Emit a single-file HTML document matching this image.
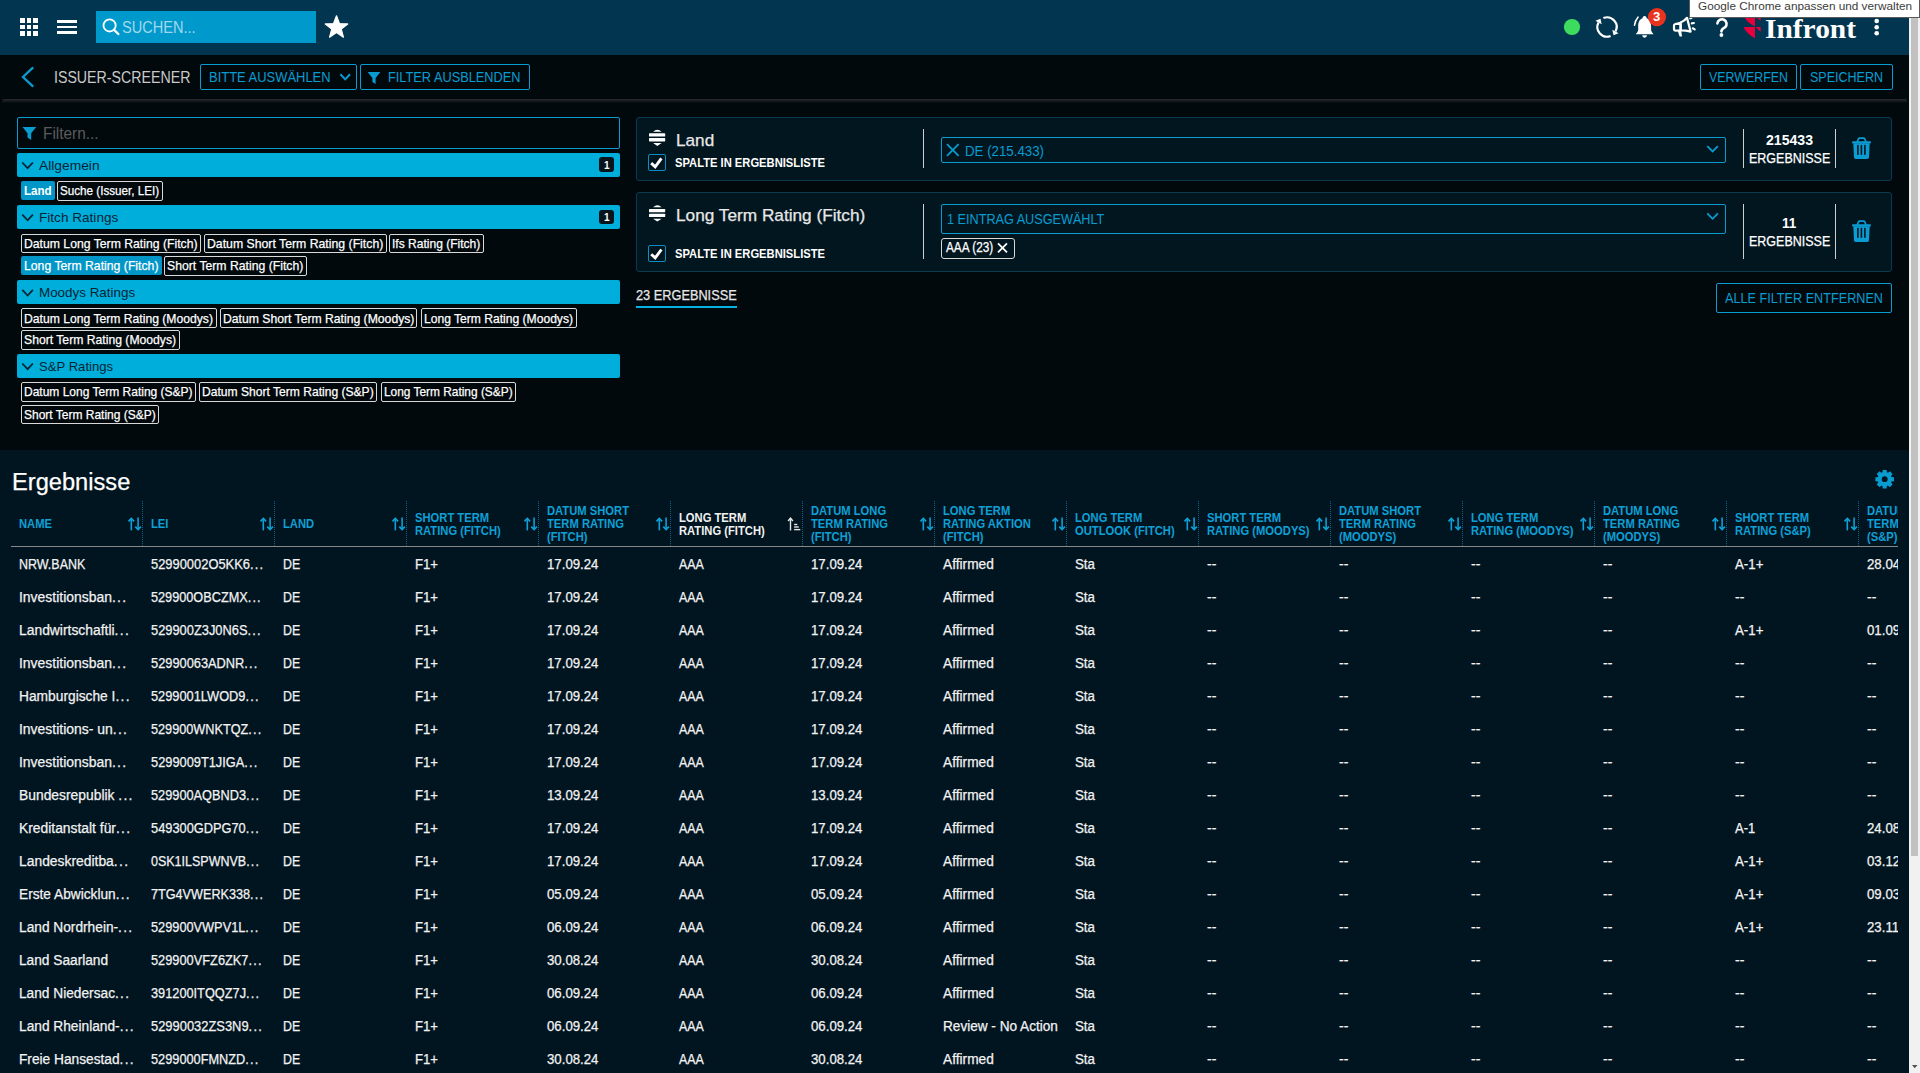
<!DOCTYPE html>
<html><head><meta charset="utf-8"><title>Issuer-Screener</title>
<style>
html,body{margin:0;padding:0}
body{width:1920px;height:1073px;overflow:hidden;position:relative;background:#02090d;font-family:"Liberation Sans",sans-serif}
.t{position:absolute;white-space:pre;transform-origin:0 0}
.s{-webkit-text-stroke:0.25px currentColor}
svg{position:absolute;overflow:visible}

</style></head><body>
<div style="position:absolute;left:0px;top:0px;width:1909px;height:55px;background:#023550"></div>
<div style="position:absolute;left:20px;top:18px;width:4.7px;height:4.7px;background:#fff"></div>
<div style="position:absolute;left:20px;top:24.6px;width:4.7px;height:4.7px;background:#fff"></div>
<div style="position:absolute;left:20px;top:31.2px;width:4.7px;height:4.7px;background:#fff"></div>
<div style="position:absolute;left:26.55px;top:18px;width:4.7px;height:4.7px;background:#fff"></div>
<div style="position:absolute;left:26.55px;top:24.6px;width:4.7px;height:4.7px;background:#fff"></div>
<div style="position:absolute;left:26.55px;top:31.2px;width:4.7px;height:4.7px;background:#fff"></div>
<div style="position:absolute;left:33.1px;top:18px;width:4.7px;height:4.7px;background:#fff"></div>
<div style="position:absolute;left:33.1px;top:24.6px;width:4.7px;height:4.7px;background:#fff"></div>
<div style="position:absolute;left:33.1px;top:31.2px;width:4.7px;height:4.7px;background:#fff"></div>
<div style="position:absolute;left:57px;top:20px;width:20px;height:2.5px;background:#fff"></div>
<div style="position:absolute;left:57px;top:25.6px;width:20px;height:2.5px;background:#fff"></div>
<div style="position:absolute;left:57px;top:31px;width:20px;height:2.5px;background:#fff"></div>
<div style="position:absolute;left:96px;top:11px;width:220px;height:32px;background:#0099cc"></div>
<svg style="left:0;top:0" width="1" height="1"><circle cx="109.6" cy="25.4" r="6.1" fill="none" stroke="#fff" stroke-width="1.8"/><line x1="114" y1="29.8" x2="118.4" y2="34" stroke="#fff" stroke-width="2.3" stroke-linecap="round"/></svg>
<div class="t" style="left:122.40px;top:19.00px;font-size:17.4px;line-height:17.4px;color:#a3d8ec;font-weight:normal;transform:scaleX(0.8370);">SUCHEN...</div>
<svg style="left:0;top:0" width="1" height="1"><polygon points="336.50,15.80 339.44,23.55 347.72,23.95 341.26,29.15 343.44,37.15 336.50,32.60 329.56,37.15 331.74,29.15 325.28,23.95 333.56,23.55" fill="#fff" stroke="#fff" stroke-width="1.2" stroke-linejoin="round"/></svg>
<svg style="left:0;top:0" width="1" height="1"><circle cx="1572" cy="27" r="8.1" fill="#3ddc5f"/></svg>
<svg style="left:0;top:0" width="1" height="1"><path d="M1603.40,18.10 A9.6,9.6 0 0 1 1615.48,31.51" fill="none" stroke="#fff" stroke-width="2.2"/><path d="M1610.60,35.90 A9.6,9.6 0 0 1 1598.52,22.49" fill="none" stroke="#fff" stroke-width="2.2"/><polygon points="1613.50,35.22 1618.63,33.18 1612.32,29.83" fill="#fff"/><polygon points="1600.50,18.78 1595.37,20.82 1601.68,24.17" fill="#fff"/></svg>
<svg style="left:0;top:0" width="1" height="1"><path d="M1644.6,16 C1643.2,16 1642.6,17 1642.6,18.2 C1639.3,19.2 1638.2,22.5 1638.2,26 L1638.2,29.8 C1638.2,31.6 1636.6,33 1635.8,34.2 L1653.6,34.2 C1652.7,33 1651.1,31.6 1651.1,29.8 L1651.1,26 C1651.1,22.5 1650,19.2 1646.6,18.2 C1646.6,17 1646,16 1644.6,16 Z M1642.2,35.3 A2.4,2.4 0 0 0 1647,35.3 Z" fill="#fff"/><path d="M1634.5,25.3 C1634.8,22 1636,19.6 1638,17.2" fill="none" stroke="#fff" stroke-width="1.6" stroke-linecap="round"/></svg>
<svg style="left:0;top:0" width="1" height="1"><circle cx="1657" cy="17.1" r="9.1" fill="#e8341f"/></svg>
<div class="t" style="left:1653.30px;top:11.40px;font-size:12px;line-height:12px;color:#fff;font-weight:bold;transform:scaleX(1.0916);">3</div>
<svg style="left:0;top:0" width="1" height="1"><g fill="none" stroke="#fff" stroke-width="2.2" stroke-linejoin="round" stroke-linecap="round"><path d="M1680.6,22.6 Q1684.4,21 1687,17.8 L1690.6,31.6 Q1685.6,30.2 1680.6,30.3 Z"/><path d="M1674,25.6 Q1674,24.3 1675.3,24 L1680.6,22.8 L1680.6,30.3 L1675.3,30.6 Q1674,30.6 1674,29.3 Z"/><path d="M1690.3,18.3 L1691.5,17.9"/><path d="M1691.8,23.3 L1693.9,23"/><path d="M1692.8,28.3 L1694.7,29.4"/></g><path d="M1677.6,30.6 L1681.2,30.4 L1682,36.4 L1679.6,36.6 Z" fill="#fff"/></svg>
<svg style="left:0;top:0" width="1" height="1"><path d="M1717.4,23.4 A4.6,4.6 0 1 1 1725.2,27.2 Q1721.5,29.2 1721.4,31.4" fill="none" stroke="#fff" stroke-width="2.6" stroke-linecap="round"/><circle cx="1721.4" cy="35" r="1.9" fill="#fff"/></svg>
<svg style="left:0;top:0" width="1" height="1"><g fill="#e8003d"><path d="M1744.9,17.9 L1755,17.9 L1755,26.3 Q1748.5,23.5 1744.9,17.9 Z"/><path d="M1757,17.9 L1760.7,17.9 L1760.7,20.8 Z"/><path d="M1743.5,27 L1755,27 L1755,38.3 Q1746.5,34 1743.5,27 Z"/><path d="M1755.5,27 L1760.7,27 L1760.7,32 Z"/></g></svg>
<div class="t" style="left:1764.60px;top:15.20px;font-size:27.8px;line-height:27.8px;color:#fff;font-weight:bold;font-family:'Liberation Serif', serif;transform:scaleX(1.0583);">Infront</div>
<svg style="left:0;top:0" width="1" height="1"><circle cx="1876.7" cy="21" r="2.3" fill="#fff"/></svg>
<svg style="left:0;top:0" width="1" height="1"><circle cx="1876.7" cy="27.2" r="2.3" fill="#fff"/></svg>
<svg style="left:0;top:0" width="1" height="1"><circle cx="1876.7" cy="33.3" r="2.3" fill="#fff"/></svg>
<svg style="left:0;top:0" width="1" height="1"><polyline points="33.2,67.4 23,77 33.2,86.6" fill="none" stroke="#089cd1" stroke-width="2.3"/></svg>
<div class="t" style="left:53.60px;top:69.00px;font-size:17.4px;line-height:17.4px;color:#c9c9c9;font-weight:normal;transform:scaleX(0.8159);">ISSUER-SCREENER</div>
<div style="position:absolute;left:200px;top:64px;width:157px;height:26px;box-sizing:border-box;border:1.5px solid #089cd1;border-radius:2px"></div>
<div class="t" style="left:209.00px;top:69.20px;font-size:15px;line-height:15px;color:#089cd1;font-weight:normal;transform:scaleX(0.8633);">BITTE AUSWÄHLEN</div>
<svg style="left:0;top:0" width="1" height="1"><polyline points="340.4,74.2 345.2,79.4 350,74.2" fill="none" stroke="#089cd1" stroke-width="2"/></svg>
<div style="position:absolute;left:360px;top:64px;width:170px;height:26px;box-sizing:border-box;border:1.5px solid #089cd1;border-radius:2px"></div>
<svg style="left:0;top:0" width="1" height="1"><path d="M367.6,72 L380.4,72 L375.6,78 L375.6,84 L372.4,82 L372.4,78 Z" fill="#089cd1"/></svg>
<div class="t" style="left:388.00px;top:69.20px;font-size:15px;line-height:15px;color:#089cd1;font-weight:normal;transform:scaleX(0.8515);">FILTER AUSBLENDEN</div>
<div style="position:absolute;left:1700px;top:64px;width:97px;height:26px;box-sizing:border-box;border:1.5px solid #089cd1;border-radius:2px"></div>
<div class="t" style="left:1708.60px;top:69.10px;font-size:15px;line-height:15px;color:#089cd1;font-weight:normal;transform:scaleX(0.8265);">VERWERFEN</div>
<div style="position:absolute;left:1800px;top:64px;width:93px;height:26px;box-sizing:border-box;border:1.5px solid #089cd1;border-radius:2px"></div>
<div class="t" style="left:1809.80px;top:69.10px;font-size:15px;line-height:15px;color:#089cd1;font-weight:normal;transform:scaleX(0.8340);">SPEICHERN</div>
<div style="position:absolute;left:2px;top:99px;width:1905px;height:4px;background:linear-gradient(#282c30,#1a1e21 40%,#02090d);border-radius:2px 2px 0 0"></div>
<div style="position:absolute;left:17px;top:117px;width:603px;height:32px;box-sizing:border-box;border:1px solid #089cd1;border-radius:2px"></div>
<svg style="left:0;top:0" width="1" height="1"><path d="M22.5,127 L36.2,127 L31.2,133.2 L31.2,140 L27.5,137.6 L27.5,133.2 Z" fill="#089cd1"/></svg>
<div class="t" style="left:42.50px;top:126.00px;font-size:16.7px;line-height:16.7px;color:#5b5b5b;font-weight:normal;transform:scaleX(0.9207);">Filtern...</div>
<div style="position:absolute;left:17px;top:153px;width:603px;height:24px;background:#00aedb;border-radius:2px"></div>
<svg style="left:0;top:0" width="1" height="1"><polyline points="22.3,162.50 27.6,168.10 32.9,162.50" fill="none" stroke="#062433" stroke-width="1.8"/></svg>
<div class="t" style="left:38.80px;top:159.90px;font-size:12.9px;line-height:12.9px;color:#062433;font-weight:normal;transform:scaleX(1.0705);">Allgemein</div>
<div style="position:absolute;left:599px;top:157.3px;width:15px;height:14.9px;background:#07141c;border-radius:3px"></div>
<div class="t" style="left:603.60px;top:160.20px;font-size:10.5px;line-height:10.5px;color:#fff;font-weight:bold;transform:scaleX(0.9583);">1</div>
<div style="position:absolute;left:21px;top:181.3px;width:34px;height:18.9px;background:#0096c8;border-radius:2px"></div>
<div class="t" style="left:23.90px;top:185.40px;font-size:12.9px;line-height:12.9px;color:#fff;font-weight:bold;transform:scaleX(0.8962);">Land</div>
<div style="position:absolute;left:57.2px;top:181.3px;width:105.6px;height:19.5px;box-sizing:border-box;border:1px solid #d9d9d9;border-radius:2px"></div>
<div class="t s" style="left:60.10px;top:185.40px;font-size:12.9px;line-height:12.9px;color:#fff;font-weight:normal;transform:scaleX(0.9049);">Suche (Issuer, LEI)</div>
<div style="position:absolute;left:17px;top:205.2px;width:603px;height:23.6px;background:#00aedb;border-radius:2px"></div>
<svg style="left:0;top:0" width="1" height="1"><polyline points="22.3,214.70 27.6,220.30 32.9,214.70" fill="none" stroke="#062433" stroke-width="1.8"/></svg>
<div class="t" style="left:38.80px;top:212.10px;font-size:12.9px;line-height:12.9px;color:#062433;font-weight:normal;transform:scaleX(1.0540);">Fitch Ratings</div>
<div style="position:absolute;left:599px;top:209.5px;width:15px;height:14.9px;background:#07141c;border-radius:3px"></div>
<div class="t" style="left:603.60px;top:212.40px;font-size:10.5px;line-height:10.5px;color:#fff;font-weight:bold;transform:scaleX(0.9583);">1</div>
<div style="position:absolute;left:21px;top:233.9px;width:179.9px;height:19.5px;box-sizing:border-box;border:1px solid #d9d9d9;border-radius:2px"></div>
<div class="t s" style="left:23.90px;top:238.00px;font-size:12.9px;line-height:12.9px;color:#fff;font-weight:normal;transform:scaleX(0.9472);">Datum Long Term Rating (Fitch)</div>
<div style="position:absolute;left:204px;top:233.9px;width:182.7px;height:19.5px;box-sizing:border-box;border:1px solid #d9d9d9;border-radius:2px"></div>
<div class="t s" style="left:206.90px;top:238.00px;font-size:12.9px;line-height:12.9px;color:#fff;font-weight:normal;transform:scaleX(0.9514);">Datum Short Term Rating (Fitch)</div>
<div style="position:absolute;left:389.3px;top:233.9px;width:94.7px;height:19.5px;box-sizing:border-box;border:1px solid #d9d9d9;border-radius:2px"></div>
<div class="t s" style="left:392.20px;top:238.00px;font-size:12.9px;line-height:12.9px;color:#fff;font-weight:normal;transform:scaleX(0.9338);">Ifs Rating (Fitch)</div>
<div style="position:absolute;left:21px;top:256.1px;width:140.9px;height:18.9px;background:#0096c8;border-radius:2px"></div>
<div class="t s" style="left:23.90px;top:260.20px;font-size:12.9px;line-height:12.9px;color:#fff;font-weight:normal;transform:scaleX(0.9497);">Long Term Rating (Fitch)</div>
<div style="position:absolute;left:164.2px;top:256.1px;width:142.7px;height:19.5px;box-sizing:border-box;border:1px solid #d9d9d9;border-radius:2px"></div>
<div class="t s" style="left:167.10px;top:260.20px;font-size:12.9px;line-height:12.9px;color:#fff;font-weight:normal;transform:scaleX(0.9482);">Short Term Rating (Fitch)</div>
<div style="position:absolute;left:17px;top:280.4px;width:603px;height:23.4px;background:#00aedb;border-radius:2px"></div>
<svg style="left:0;top:0" width="1" height="1"><polyline points="22.3,289.90 27.6,295.50 32.9,289.90" fill="none" stroke="#062433" stroke-width="1.8"/></svg>
<div class="t" style="left:38.80px;top:287.30px;font-size:12.9px;line-height:12.9px;color:#062433;font-weight:normal;transform:scaleX(1.0396);">Moodys Ratings</div>
<div style="position:absolute;left:21.2px;top:308.4px;width:195.4px;height:19.5px;box-sizing:border-box;border:1px solid #d9d9d9;border-radius:2px"></div>
<div class="t s" style="left:24.10px;top:312.50px;font-size:12.9px;line-height:12.9px;color:#fff;font-weight:normal;transform:scaleX(0.9432);">Datum Long Term Rating (Moodys)</div>
<div style="position:absolute;left:219.7px;top:308.4px;width:197.8px;height:19.5px;box-sizing:border-box;border:1px solid #d9d9d9;border-radius:2px"></div>
<div class="t s" style="left:222.60px;top:312.50px;font-size:12.9px;line-height:12.9px;color:#fff;font-weight:normal;transform:scaleX(0.9452);">Datum Short Term Rating (Moodys)</div>
<div style="position:absolute;left:421.2px;top:308.4px;width:155.4px;height:19.5px;box-sizing:border-box;border:1px solid #d9d9d9;border-radius:2px"></div>
<div class="t s" style="left:424.10px;top:312.50px;font-size:12.9px;line-height:12.9px;color:#fff;font-weight:normal;transform:scaleX(0.9381);">Long Term Rating (Moodys)</div>
<div style="position:absolute;left:21.2px;top:330.3px;width:158.5px;height:19.5px;box-sizing:border-box;border:1px solid #d9d9d9;border-radius:2px"></div>
<div class="t s" style="left:24.10px;top:334.40px;font-size:12.9px;line-height:12.9px;color:#fff;font-weight:normal;transform:scaleX(0.9450);">Short Term Rating (Moodys)</div>
<div style="position:absolute;left:17px;top:354px;width:603px;height:23.5px;background:#00aedb;border-radius:2px"></div>
<svg style="left:0;top:0" width="1" height="1"><polyline points="22.3,363.50 27.6,369.10 32.9,363.50" fill="none" stroke="#062433" stroke-width="1.8"/></svg>
<div class="t" style="left:38.80px;top:360.90px;font-size:12.9px;line-height:12.9px;color:#062433;font-weight:normal;transform:scaleX(1.0170);">S&amp;P Ratings</div>
<div style="position:absolute;left:21.2px;top:382.2px;width:175px;height:19.5px;box-sizing:border-box;border:1px solid #d9d9d9;border-radius:2px"></div>
<div class="t s" style="left:24.10px;top:386.30px;font-size:12.9px;line-height:12.9px;color:#fff;font-weight:normal;transform:scaleX(0.9313);">Datum Long Term Rating (S&amp;P)</div>
<div style="position:absolute;left:199.4px;top:382.2px;width:178.1px;height:19.5px;box-sizing:border-box;border:1px solid #d9d9d9;border-radius:2px"></div>
<div class="t s" style="left:202.30px;top:386.30px;font-size:12.9px;line-height:12.9px;color:#fff;font-weight:normal;transform:scaleX(0.9375);">Datum Short Term Rating (S&amp;P)</div>
<div style="position:absolute;left:380.6px;top:382.2px;width:135px;height:19.5px;box-sizing:border-box;border:1px solid #d9d9d9;border-radius:2px"></div>
<div class="t s" style="left:383.50px;top:386.30px;font-size:12.9px;line-height:12.9px;color:#fff;font-weight:normal;transform:scaleX(0.9220);">Long Term Rating (S&amp;P)</div>
<div style="position:absolute;left:21.2px;top:404.6px;width:138.2px;height:19.5px;box-sizing:border-box;border:1px solid #d9d9d9;border-radius:2px"></div>
<div class="t s" style="left:24.10px;top:408.70px;font-size:12.9px;line-height:12.9px;color:#fff;font-weight:normal;transform:scaleX(0.9307);">Short Term Rating (S&amp;P)</div>
<div style="position:absolute;left:636px;top:117.3px;width:1256px;height:63.3px;box-sizing:border-box;background:#02161f;border:1px solid #0c394e;border-radius:3px"></div>
<svg style="left:0;top:0" width="1" height="1"><g fill="#fff"><path d="M653.1,131.70 Q657.35,127.80 661.6,131.70 Z"/><rect x="649" y="133.30" width="16.2" height="3.3" rx="0.6"/><rect x="649" y="138.10" width="16.2" height="3.3" rx="0.6"/><path d="M653.1,143.10 L657.35,146.00 L661.6,143.10 Z"/></g></svg>
<div class="t s" style="left:676.30px;top:133.00px;font-size:16.8px;line-height:16.8px;color:#e8e8e8;font-weight:normal;transform:scaleX(1.0229);">Land</div>
<div style="position:absolute;left:648.3px;top:154.2px;width:17.5px;height:16.6px;box-sizing:border-box;border:1.3px solid #0a8ec3;border-radius:2px"></div>
<svg style="left:0;top:0" width="1" height="1"><polyline points="651.2,163.10 655.2,166.80 661.4,158.40" fill="none" stroke="#fff" stroke-width="2.9"/></svg>
<div class="t" style="left:674.80px;top:156.00px;font-size:13.1px;line-height:13.1px;color:#fff;font-weight:bold;transform:scaleX(0.8543);">SPALTE IN ERGEBNISLISTE</div>
<div style="position:absolute;left:922.8px;top:129px;width:1.2px;height:39px;background:#cfcfcf"></div>
<div style="position:absolute;left:941px;top:137px;width:785px;height:26px;box-sizing:border-box;border:1.3px solid #089cd1;border-radius:2px"></div>
<svg style="left:0;top:0" width="1" height="1"><polyline points="1707.3,146.10 1712.6,151.50 1717.9,146.10" fill="none" stroke="#089cd1" stroke-width="1.8"/></svg>
<svg style="left:0;top:0" width="1" height="1"><g stroke="#089cd1" stroke-width="1.8"><line x1="947" y1="144.2" x2="958.6" y2="155.8"/><line x1="958.6" y1="144.2" x2="947" y2="155.8"/></g></svg>
<div class="t" style="left:965.30px;top:144.00px;font-size:14.4px;line-height:14.4px;color:#089cd1;font-weight:normal;transform:scaleX(0.9230);">DE (215.433)</div>
<div style="position:absolute;left:1742.8px;top:129px;width:1.2px;height:39px;background:#cfcfcf"></div>
<div class="t" style="left:1766.00px;top:133.20px;font-size:14.2px;line-height:14.2px;color:#fff;font-weight:bold;transform:scaleX(0.9927);">215433</div>
<div class="t s" style="left:1748.70px;top:151.30px;font-size:14.2px;line-height:14.2px;color:#fff;font-weight:normal;transform:scaleX(0.8813);">ERGEBNISSE</div>
<div style="position:absolute;left:1834.8px;top:129px;width:1.2px;height:39px;background:#cfcfcf"></div>
<svg style="left:0;top:0" width="1" height="1"><path d="M1857.2,141.80 L1858.4,139.00 Q1858.8,138.20 1859.6,138.20 L1863.6,138.20 Q1864.4,138.20 1864.8,139.00 L1866,141.80" fill="none" stroke="#0a9cd2" stroke-width="1.7"/><rect x="1852" y="141.30" width="19" height="2.1" rx="1" fill="#0a9cd2"/><path d="M1853.3,143.20 L1869.7,143.20 L1869,157.20 Q1868.9,158.90 1867.2,158.90 L1855.8,158.90 Q1854.1,158.90 1854,157.20 Z" fill="#0a9cd2"/><g fill="#02161f"><rect x="1857.1" y="144.90" width="1.6" height="9.9"/><rect x="1860.6" y="144.90" width="1.6" height="9.9"/><rect x="1864.1" y="144.90" width="1.6" height="9.9"/></g></svg>
<div style="position:absolute;left:636px;top:192.3px;width:1256px;height:79.3px;box-sizing:border-box;background:#02161f;border:1px solid #0c394e;border-radius:3px"></div>
<svg style="left:0;top:0" width="1" height="1"><g fill="#fff"><path d="M653.1,207.30 Q657.35,203.40 661.6,207.30 Z"/><rect x="649" y="208.90" width="16.2" height="3.3" rx="0.6"/><rect x="649" y="213.70" width="16.2" height="3.3" rx="0.6"/><path d="M653.1,218.70 L657.35,221.60 L661.6,218.70 Z"/></g></svg>
<div class="t s" style="left:676.20px;top:208.00px;font-size:16.8px;line-height:16.8px;color:#e8e8e8;font-weight:normal;transform:scaleX(1.0268);">Long Term Rating (Fitch)</div>
<div style="position:absolute;left:648.3px;top:245.3px;width:17.5px;height:16.6px;box-sizing:border-box;border:1.3px solid #0a8ec3;border-radius:2px"></div>
<svg style="left:0;top:0" width="1" height="1"><polyline points="651.2,254.20 655.2,257.90 661.4,249.50" fill="none" stroke="#fff" stroke-width="2.9"/></svg>
<div class="t" style="left:674.80px;top:247.00px;font-size:13.1px;line-height:13.1px;color:#fff;font-weight:bold;transform:scaleX(0.8543);">SPALTE IN ERGEBNISLISTE</div>
<div style="position:absolute;left:922.8px;top:204.2px;width:1.2px;height:54.8px;background:#cfcfcf"></div>
<div style="position:absolute;left:941px;top:204.3px;width:785px;height:29.5px;box-sizing:border-box;border:1.3px solid #089cd1;border-radius:2px"></div>
<svg style="left:0;top:0" width="1" height="1"><polyline points="1707.3,213.40 1712.6,218.80 1717.9,213.40" fill="none" stroke="#089cd1" stroke-width="1.8"/></svg>
<div class="t" style="left:946.70px;top:212.20px;font-size:14.4px;line-height:14.4px;color:#089cd1;font-weight:normal;transform:scaleX(0.8795);">1 EINTRAG AUSGEWÄHLT</div>
<div style="position:absolute;left:941px;top:237.5px;width:74px;height:21.7px;box-sizing:border-box;border:1.2px solid #d9d9d9;border-radius:3px"></div>
<div class="t s" style="left:946.20px;top:240.40px;font-size:14px;line-height:14px;color:#fff;font-weight:normal;transform:scaleX(0.8424);">AAA (23)</div>
<svg style="left:0;top:0" width="1" height="1"><g stroke="#fff" stroke-width="1.7"><line x1="998" y1="243.4" x2="1007" y2="252.4"/><line x1="1007" y1="243.4" x2="998" y2="252.4"/></g></svg>
<div style="position:absolute;left:1742.8px;top:204px;width:1.2px;height:55px;background:#cfcfcf"></div>
<div class="t" style="left:1782.40px;top:215.90px;font-size:14.2px;line-height:14.2px;color:#fff;font-weight:bold;transform:scaleX(0.9533);">11</div>
<div class="t s" style="left:1748.70px;top:234.10px;font-size:14.2px;line-height:14.2px;color:#fff;font-weight:normal;transform:scaleX(0.8813);">ERGEBNISSE</div>
<div style="position:absolute;left:1834.8px;top:204px;width:1.2px;height:55px;background:#cfcfcf"></div>
<svg style="left:0;top:0" width="1" height="1"><path d="M1857.2,224.80 L1858.4,222.00 Q1858.8,221.20 1859.6,221.20 L1863.6,221.20 Q1864.4,221.20 1864.8,222.00 L1866,224.80" fill="none" stroke="#0a9cd2" stroke-width="1.7"/><rect x="1852" y="224.30" width="19" height="2.1" rx="1" fill="#0a9cd2"/><path d="M1853.3,226.20 L1869.7,226.20 L1869,240.20 Q1868.9,241.90 1867.2,241.90 L1855.8,241.90 Q1854.1,241.90 1854,240.20 Z" fill="#0a9cd2"/><g fill="#02161f"><rect x="1857.1" y="227.90" width="1.6" height="9.9"/><rect x="1860.6" y="227.90" width="1.6" height="9.9"/><rect x="1864.1" y="227.90" width="1.6" height="9.9"/></g></svg>
<div class="t s" style="left:636.00px;top:288.00px;font-size:14.6px;line-height:14.6px;color:#e6e6e6;font-weight:normal;transform:scaleX(0.8742);">23 ERGEBNISSE</div>
<div style="position:absolute;left:636px;top:305.8px;width:101px;height:2.6px;background:#05b0e2"></div>
<div style="position:absolute;left:1716px;top:283.2px;width:176px;height:29.6px;box-sizing:border-box;border:1.5px solid #089cd1;border-radius:2px"></div>
<div class="t" style="left:1724.80px;top:290.90px;font-size:14.2px;line-height:14.2px;color:#089cd1;font-weight:normal;transform:scaleX(0.8920);">ALLE FILTER ENTFERNEN</div>
<div style="position:absolute;left:0px;top:450px;width:1909px;height:623px;background:#011520"></div>
<div class="t s" style="left:11.90px;top:470.00px;font-size:24.8px;line-height:24.8px;color:#fff;font-weight:normal;transform:scaleX(0.9536);">Ergebnisse</div>
<svg style="left:0;top:0" width="1" height="1"><polygon points="1890.90,476.94 1893.99,477.22 1893.99,481.18 1890.90,481.46 1890.68,481.99 1892.67,484.37 1889.87,487.17 1887.49,485.18 1886.96,485.40 1886.68,488.49 1882.72,488.49 1882.44,485.40 1881.91,485.18 1879.53,487.17 1876.73,484.37 1878.72,481.99 1878.50,481.46 1875.41,481.18 1875.41,477.22 1878.50,476.94 1878.72,476.41 1876.73,474.03 1879.53,471.23 1881.91,473.22 1882.44,473.00 1882.72,469.91 1886.68,469.91 1886.96,473.00 1887.49,473.22 1889.87,471.23 1892.67,474.03 1890.68,476.41" fill="#089cd1"/><circle cx="1884.7" cy="479.2" r="7.2" fill="#089cd1"/><circle cx="1884.7" cy="479.2" r="2.9" fill="#011520"/></svg>
<div style="position:absolute;left:0;top:0;width:1898px;height:1073px;overflow:hidden">
<div style="position:absolute;left:11px;top:546px;width:1887px;height:1px;background:#858789"></div>
<div class="t" style="left:19.30px;top:518.10px;font-size:12.4px;line-height:12.4px;color:#0ea0d6;font-weight:bold;transform:scaleX(0.9050);">NAME</div>
<div style="position:absolute;left:142px;top:501px;width:1px;height:45px;background:repeating-linear-gradient(#0b5f88 0 1px,transparent 1px 2px)"></div>
<svg style="left:0;top:0" width="1" height="1"><g fill="none" stroke="#0ea0d6" stroke-width="1.6"><line x1="131.3" y1="518.6" x2="131.3" y2="530.4"/><polyline points="128.5,521.4 131.3,518.4 134.10000000000002,521.4"/><line x1="138.10000000000002" y1="517.4" x2="138.10000000000002" y2="529.4"/><polyline points="135.3,526.6 138.10000000000002,529.6 140.9,526.6"/></g></svg>
<div class="t" style="left:151.30px;top:518.10px;font-size:12.4px;line-height:12.4px;color:#0ea0d6;font-weight:bold;transform:scaleX(0.9050);">LEI</div>
<div style="position:absolute;left:274px;top:501px;width:1px;height:45px;background:repeating-linear-gradient(#0b5f88 0 1px,transparent 1px 2px)"></div>
<svg style="left:0;top:0" width="1" height="1"><g fill="none" stroke="#0ea0d6" stroke-width="1.6"><line x1="263.3" y1="518.6" x2="263.3" y2="530.4"/><polyline points="260.5,521.4 263.3,518.4 266.1,521.4"/><line x1="270.1" y1="517.4" x2="270.1" y2="529.4"/><polyline points="267.3,526.6 270.1,529.6 272.90000000000003,526.6"/></g></svg>
<div class="t" style="left:283.30px;top:518.10px;font-size:12.4px;line-height:12.4px;color:#0ea0d6;font-weight:bold;transform:scaleX(0.9050);">LAND</div>
<div style="position:absolute;left:406px;top:501px;width:1px;height:45px;background:repeating-linear-gradient(#0b5f88 0 1px,transparent 1px 2px)"></div>
<svg style="left:0;top:0" width="1" height="1"><g fill="none" stroke="#0ea0d6" stroke-width="1.6"><line x1="395.3" y1="518.6" x2="395.3" y2="530.4"/><polyline points="392.5,521.4 395.3,518.4 398.1,521.4"/><line x1="402.1" y1="517.4" x2="402.1" y2="529.4"/><polyline points="399.3,526.6 402.1,529.6 404.90000000000003,526.6"/></g></svg>
<div class="t" style="left:415.30px;top:511.90px;font-size:12.4px;line-height:12.4px;color:#0ea0d6;font-weight:bold;transform:scaleX(0.9050);">SHORT TERM</div>
<div class="t" style="left:415.30px;top:524.80px;font-size:12.4px;line-height:12.4px;color:#0ea0d6;font-weight:bold;transform:scaleX(0.9050);">RATING (FITCH)</div>
<div style="position:absolute;left:538px;top:501px;width:1px;height:45px;background:repeating-linear-gradient(#0b5f88 0 1px,transparent 1px 2px)"></div>
<svg style="left:0;top:0" width="1" height="1"><g fill="none" stroke="#0ea0d6" stroke-width="1.6"><line x1="527.3" y1="518.6" x2="527.3" y2="530.4"/><polyline points="524.5,521.4 527.3,518.4 530.0999999999999,521.4"/><line x1="534.0999999999999" y1="517.4" x2="534.0999999999999" y2="529.4"/><polyline points="531.3,526.6 534.0999999999999,529.6 536.9,526.6"/></g></svg>
<div class="t" style="left:547.30px;top:504.90px;font-size:12.4px;line-height:12.4px;color:#0ea0d6;font-weight:bold;transform:scaleX(0.9050);">DATUM SHORT</div>
<div class="t" style="left:547.30px;top:517.90px;font-size:12.4px;line-height:12.4px;color:#0ea0d6;font-weight:bold;transform:scaleX(0.9050);">TERM RATING</div>
<div class="t" style="left:547.30px;top:531.40px;font-size:12.4px;line-height:12.4px;color:#0ea0d6;font-weight:bold;transform:scaleX(0.9050);">(FITCH)</div>
<div style="position:absolute;left:670px;top:501px;width:1px;height:45px;background:repeating-linear-gradient(#0b5f88 0 1px,transparent 1px 2px)"></div>
<svg style="left:0;top:0" width="1" height="1"><g fill="none" stroke="#0ea0d6" stroke-width="1.6"><line x1="659.3" y1="518.6" x2="659.3" y2="530.4"/><polyline points="656.5,521.4 659.3,518.4 662.0999999999999,521.4"/><line x1="666.0999999999999" y1="517.4" x2="666.0999999999999" y2="529.4"/><polyline points="663.3,526.6 666.0999999999999,529.6 668.9,526.6"/></g></svg>
<div class="t" style="left:679.30px;top:511.90px;font-size:12.4px;line-height:12.4px;color:#f2f2f2;font-weight:bold;transform:scaleX(0.9050);">LONG TERM</div>
<div class="t" style="left:679.30px;top:524.80px;font-size:12.4px;line-height:12.4px;color:#f2f2f2;font-weight:bold;transform:scaleX(0.9050);">RATING (FITCH)</div>
<div style="position:absolute;left:802px;top:501px;width:1px;height:45px;background:repeating-linear-gradient(#0b5f88 0 1px,transparent 1px 2px)"></div>
<svg style="left:0;top:0" width="1" height="1"><g fill="none" stroke="#e6e6e6" stroke-width="1.4"><line x1="790.5" y1="519" x2="790.5" y2="530.5"/><polyline points="788.0999999999999,521 790.5,518.2 792.9,521"/><line x1="794.0999999999999" y1="524.5" x2="797.3" y2="524.5"/><line x1="794.0999999999999" y1="527" x2="798.8" y2="527"/><line x1="794.0999999999999" y1="529.6" x2="800.3" y2="529.6"/></g></svg>
<div class="t" style="left:811.30px;top:504.90px;font-size:12.4px;line-height:12.4px;color:#0ea0d6;font-weight:bold;transform:scaleX(0.9050);">DATUM LONG</div>
<div class="t" style="left:811.30px;top:517.90px;font-size:12.4px;line-height:12.4px;color:#0ea0d6;font-weight:bold;transform:scaleX(0.9050);">TERM RATING</div>
<div class="t" style="left:811.30px;top:531.40px;font-size:12.4px;line-height:12.4px;color:#0ea0d6;font-weight:bold;transform:scaleX(0.9050);">(FITCH)</div>
<div style="position:absolute;left:934px;top:501px;width:1px;height:45px;background:repeating-linear-gradient(#0b5f88 0 1px,transparent 1px 2px)"></div>
<svg style="left:0;top:0" width="1" height="1"><g fill="none" stroke="#0ea0d6" stroke-width="1.6"><line x1="923.3" y1="518.6" x2="923.3" y2="530.4"/><polyline points="920.5,521.4 923.3,518.4 926.0999999999999,521.4"/><line x1="930.0999999999999" y1="517.4" x2="930.0999999999999" y2="529.4"/><polyline points="927.3,526.6 930.0999999999999,529.6 932.9,526.6"/></g></svg>
<div class="t" style="left:943.30px;top:504.90px;font-size:12.4px;line-height:12.4px;color:#0ea0d6;font-weight:bold;transform:scaleX(0.9050);">LONG TERM</div>
<div class="t" style="left:943.30px;top:517.90px;font-size:12.4px;line-height:12.4px;color:#0ea0d6;font-weight:bold;transform:scaleX(0.9050);">RATING AKTION</div>
<div class="t" style="left:943.30px;top:531.40px;font-size:12.4px;line-height:12.4px;color:#0ea0d6;font-weight:bold;transform:scaleX(0.9050);">(FITCH)</div>
<div style="position:absolute;left:1066px;top:501px;width:1px;height:45px;background:repeating-linear-gradient(#0b5f88 0 1px,transparent 1px 2px)"></div>
<svg style="left:0;top:0" width="1" height="1"><g fill="none" stroke="#0ea0d6" stroke-width="1.6"><line x1="1055.3" y1="518.6" x2="1055.3" y2="530.4"/><polyline points="1052.5,521.4 1055.3,518.4 1058.1,521.4"/><line x1="1062.1" y1="517.4" x2="1062.1" y2="529.4"/><polyline points="1059.3,526.6 1062.1,529.6 1064.8999999999999,526.6"/></g></svg>
<div class="t" style="left:1075.30px;top:511.90px;font-size:12.4px;line-height:12.4px;color:#0ea0d6;font-weight:bold;transform:scaleX(0.9050);">LONG TERM</div>
<div class="t" style="left:1075.30px;top:524.80px;font-size:12.4px;line-height:12.4px;color:#0ea0d6;font-weight:bold;transform:scaleX(0.9050);">OUTLOOK (FITCH)</div>
<div style="position:absolute;left:1198px;top:501px;width:1px;height:45px;background:repeating-linear-gradient(#0b5f88 0 1px,transparent 1px 2px)"></div>
<svg style="left:0;top:0" width="1" height="1"><g fill="none" stroke="#0ea0d6" stroke-width="1.6"><line x1="1187.3" y1="518.6" x2="1187.3" y2="530.4"/><polyline points="1184.5,521.4 1187.3,518.4 1190.1,521.4"/><line x1="1194.1" y1="517.4" x2="1194.1" y2="529.4"/><polyline points="1191.3,526.6 1194.1,529.6 1196.8999999999999,526.6"/></g></svg>
<div class="t" style="left:1207.30px;top:511.90px;font-size:12.4px;line-height:12.4px;color:#0ea0d6;font-weight:bold;transform:scaleX(0.9050);">SHORT TERM</div>
<div class="t" style="left:1207.30px;top:524.80px;font-size:12.4px;line-height:12.4px;color:#0ea0d6;font-weight:bold;transform:scaleX(0.9050);">RATING (MOODYS)</div>
<div style="position:absolute;left:1330px;top:501px;width:1px;height:45px;background:repeating-linear-gradient(#0b5f88 0 1px,transparent 1px 2px)"></div>
<svg style="left:0;top:0" width="1" height="1"><g fill="none" stroke="#0ea0d6" stroke-width="1.6"><line x1="1319.3" y1="518.6" x2="1319.3" y2="530.4"/><polyline points="1316.5,521.4 1319.3,518.4 1322.1,521.4"/><line x1="1326.1" y1="517.4" x2="1326.1" y2="529.4"/><polyline points="1323.3,526.6 1326.1,529.6 1328.8999999999999,526.6"/></g></svg>
<div class="t" style="left:1339.30px;top:504.90px;font-size:12.4px;line-height:12.4px;color:#0ea0d6;font-weight:bold;transform:scaleX(0.9050);">DATUM SHORT</div>
<div class="t" style="left:1339.30px;top:517.90px;font-size:12.4px;line-height:12.4px;color:#0ea0d6;font-weight:bold;transform:scaleX(0.9050);">TERM RATING</div>
<div class="t" style="left:1339.30px;top:531.40px;font-size:12.4px;line-height:12.4px;color:#0ea0d6;font-weight:bold;transform:scaleX(0.9050);">(MOODYS)</div>
<div style="position:absolute;left:1462px;top:501px;width:1px;height:45px;background:repeating-linear-gradient(#0b5f88 0 1px,transparent 1px 2px)"></div>
<svg style="left:0;top:0" width="1" height="1"><g fill="none" stroke="#0ea0d6" stroke-width="1.6"><line x1="1451.3" y1="518.6" x2="1451.3" y2="530.4"/><polyline points="1448.5,521.4 1451.3,518.4 1454.1,521.4"/><line x1="1458.1" y1="517.4" x2="1458.1" y2="529.4"/><polyline points="1455.3,526.6 1458.1,529.6 1460.8999999999999,526.6"/></g></svg>
<div class="t" style="left:1471.30px;top:511.90px;font-size:12.4px;line-height:12.4px;color:#0ea0d6;font-weight:bold;transform:scaleX(0.9050);">LONG TERM</div>
<div class="t" style="left:1471.30px;top:524.80px;font-size:12.4px;line-height:12.4px;color:#0ea0d6;font-weight:bold;transform:scaleX(0.9050);">RATING (MOODYS)</div>
<div style="position:absolute;left:1594px;top:501px;width:1px;height:45px;background:repeating-linear-gradient(#0b5f88 0 1px,transparent 1px 2px)"></div>
<svg style="left:0;top:0" width="1" height="1"><g fill="none" stroke="#0ea0d6" stroke-width="1.6"><line x1="1583.3" y1="518.6" x2="1583.3" y2="530.4"/><polyline points="1580.5,521.4 1583.3,518.4 1586.1,521.4"/><line x1="1590.1" y1="517.4" x2="1590.1" y2="529.4"/><polyline points="1587.3,526.6 1590.1,529.6 1592.8999999999999,526.6"/></g></svg>
<div class="t" style="left:1603.30px;top:504.90px;font-size:12.4px;line-height:12.4px;color:#0ea0d6;font-weight:bold;transform:scaleX(0.9050);">DATUM LONG</div>
<div class="t" style="left:1603.30px;top:517.90px;font-size:12.4px;line-height:12.4px;color:#0ea0d6;font-weight:bold;transform:scaleX(0.9050);">TERM RATING</div>
<div class="t" style="left:1603.30px;top:531.40px;font-size:12.4px;line-height:12.4px;color:#0ea0d6;font-weight:bold;transform:scaleX(0.9050);">(MOODYS)</div>
<div style="position:absolute;left:1726px;top:501px;width:1px;height:45px;background:repeating-linear-gradient(#0b5f88 0 1px,transparent 1px 2px)"></div>
<svg style="left:0;top:0" width="1" height="1"><g fill="none" stroke="#0ea0d6" stroke-width="1.6"><line x1="1715.3" y1="518.6" x2="1715.3" y2="530.4"/><polyline points="1712.5,521.4 1715.3,518.4 1718.1,521.4"/><line x1="1722.1" y1="517.4" x2="1722.1" y2="529.4"/><polyline points="1719.3,526.6 1722.1,529.6 1724.8999999999999,526.6"/></g></svg>
<div class="t" style="left:1735.30px;top:511.90px;font-size:12.4px;line-height:12.4px;color:#0ea0d6;font-weight:bold;transform:scaleX(0.9050);">SHORT TERM</div>
<div class="t" style="left:1735.30px;top:524.80px;font-size:12.4px;line-height:12.4px;color:#0ea0d6;font-weight:bold;transform:scaleX(0.9050);">RATING (S&amp;P)</div>
<div style="position:absolute;left:1858px;top:501px;width:1px;height:45px;background:repeating-linear-gradient(#0b5f88 0 1px,transparent 1px 2px)"></div>
<svg style="left:0;top:0" width="1" height="1"><g fill="none" stroke="#0ea0d6" stroke-width="1.6"><line x1="1847.3" y1="518.6" x2="1847.3" y2="530.4"/><polyline points="1844.5,521.4 1847.3,518.4 1850.1,521.4"/><line x1="1854.1" y1="517.4" x2="1854.1" y2="529.4"/><polyline points="1851.3,526.6 1854.1,529.6 1856.8999999999999,526.6"/></g></svg>
<div class="t" style="left:1867.30px;top:504.90px;font-size:12.4px;line-height:12.4px;color:#0ea0d6;font-weight:bold;transform:scaleX(0.9050);">DATUM SHORT</div>
<div class="t" style="left:1867.30px;top:517.90px;font-size:12.4px;line-height:12.4px;color:#0ea0d6;font-weight:bold;transform:scaleX(0.9050);">TERM RATING</div>
<div class="t" style="left:1867.30px;top:531.40px;font-size:12.4px;line-height:12.4px;color:#0ea0d6;font-weight:bold;transform:scaleX(0.9050);">(S&amp;P)</div>
<div class="t s" style="left:19.00px;top:556.80px;font-size:14px;line-height:14px;color:#f2f2f2;font-weight:normal;transform:scaleX(0.8909);">NRW.BANK</div>
<div class="t s" style="left:151.00px;top:556.80px;font-size:14px;line-height:14px;color:#f2f2f2;font-weight:normal;transform:scaleX(0.9212);">52990002O5KK6<span style="letter-spacing:1.3px">...</span></div>
<div class="t s" style="left:283.00px;top:556.80px;font-size:14px;line-height:14px;color:#f2f2f2;font-weight:normal;transform:scaleX(0.8850);">DE</div>
<div class="t s" style="left:415.00px;top:556.80px;font-size:14px;line-height:14px;color:#f2f2f2;font-weight:normal;transform:scaleX(0.9392);">F1+</div>
<div class="t s" style="left:547.00px;top:556.80px;font-size:14px;line-height:14px;color:#f2f2f2;font-weight:normal;transform:scaleX(0.9443);">17.09.24</div>
<div class="t s" style="left:679.00px;top:556.80px;font-size:14px;line-height:14px;color:#f2f2f2;font-weight:normal;transform:scaleX(0.8850);">AAA</div>
<div class="t s" style="left:811.00px;top:556.80px;font-size:14px;line-height:14px;color:#f2f2f2;font-weight:normal;transform:scaleX(0.9443);">17.09.24</div>
<div class="t s" style="left:943.00px;top:556.80px;font-size:14px;line-height:14px;color:#f2f2f2;font-weight:normal;transform:scaleX(0.9794);">Affirmed</div>
<div class="t s" style="left:1075.00px;top:556.80px;font-size:14px;line-height:14px;color:#f2f2f2;font-weight:normal;transform:scaleX(0.9489);">Sta</div>
<div class="t s" style="left:1207.00px;top:556.80px;font-size:14px;line-height:14px;color:#f2f2f2;font-weight:normal;">--</div>
<div class="t s" style="left:1339.00px;top:556.80px;font-size:14px;line-height:14px;color:#f2f2f2;font-weight:normal;">--</div>
<div class="t s" style="left:1471.00px;top:556.80px;font-size:14px;line-height:14px;color:#f2f2f2;font-weight:normal;">--</div>
<div class="t s" style="left:1603.00px;top:556.80px;font-size:14px;line-height:14px;color:#f2f2f2;font-weight:normal;">--</div>
<div class="t s" style="left:1735.00px;top:556.80px;font-size:14px;line-height:14px;color:#f2f2f2;font-weight:normal;transform:scaleX(0.9473);">A-1+</div>
<div class="t s" style="left:1867.00px;top:556.80px;font-size:14px;line-height:14px;color:#f2f2f2;font-weight:normal;transform:scaleX(0.9443);">28.04.21</div>
<div class="t s" style="left:19.00px;top:589.80px;font-size:14px;line-height:14px;color:#f2f2f2;font-weight:normal;transform:scaleX(0.9952);">Investitionsban<span style="letter-spacing:1.3px">...</span></div>
<div class="t s" style="left:151.00px;top:589.80px;font-size:14px;line-height:14px;color:#f2f2f2;font-weight:normal;transform:scaleX(0.9069);">529900OBCZMX<span style="letter-spacing:1.3px">...</span></div>
<div class="t s" style="left:283.00px;top:589.80px;font-size:14px;line-height:14px;color:#f2f2f2;font-weight:normal;transform:scaleX(0.8850);">DE</div>
<div class="t s" style="left:415.00px;top:589.80px;font-size:14px;line-height:14px;color:#f2f2f2;font-weight:normal;transform:scaleX(0.9392);">F1+</div>
<div class="t s" style="left:547.00px;top:589.80px;font-size:14px;line-height:14px;color:#f2f2f2;font-weight:normal;transform:scaleX(0.9443);">17.09.24</div>
<div class="t s" style="left:679.00px;top:589.80px;font-size:14px;line-height:14px;color:#f2f2f2;font-weight:normal;transform:scaleX(0.8850);">AAA</div>
<div class="t s" style="left:811.00px;top:589.80px;font-size:14px;line-height:14px;color:#f2f2f2;font-weight:normal;transform:scaleX(0.9443);">17.09.24</div>
<div class="t s" style="left:943.00px;top:589.80px;font-size:14px;line-height:14px;color:#f2f2f2;font-weight:normal;transform:scaleX(0.9794);">Affirmed</div>
<div class="t s" style="left:1075.00px;top:589.80px;font-size:14px;line-height:14px;color:#f2f2f2;font-weight:normal;transform:scaleX(0.9489);">Sta</div>
<div class="t s" style="left:1207.00px;top:589.80px;font-size:14px;line-height:14px;color:#f2f2f2;font-weight:normal;">--</div>
<div class="t s" style="left:1339.00px;top:589.80px;font-size:14px;line-height:14px;color:#f2f2f2;font-weight:normal;">--</div>
<div class="t s" style="left:1471.00px;top:589.80px;font-size:14px;line-height:14px;color:#f2f2f2;font-weight:normal;">--</div>
<div class="t s" style="left:1603.00px;top:589.80px;font-size:14px;line-height:14px;color:#f2f2f2;font-weight:normal;">--</div>
<div class="t s" style="left:1735.00px;top:589.80px;font-size:14px;line-height:14px;color:#f2f2f2;font-weight:normal;">--</div>
<div class="t s" style="left:1867.00px;top:589.80px;font-size:14px;line-height:14px;color:#f2f2f2;font-weight:normal;">--</div>
<div class="t s" style="left:19.00px;top:622.80px;font-size:14px;line-height:14px;color:#f2f2f2;font-weight:normal;transform:scaleX(0.9907);">Landwirtschaftli<span style="letter-spacing:1.3px">...</span></div>
<div class="t s" style="left:151.00px;top:622.80px;font-size:14px;line-height:14px;color:#f2f2f2;font-weight:normal;transform:scaleX(0.9183);">529900Z3J0N6S<span style="letter-spacing:1.3px">...</span></div>
<div class="t s" style="left:283.00px;top:622.80px;font-size:14px;line-height:14px;color:#f2f2f2;font-weight:normal;transform:scaleX(0.8850);">DE</div>
<div class="t s" style="left:415.00px;top:622.80px;font-size:14px;line-height:14px;color:#f2f2f2;font-weight:normal;transform:scaleX(0.9392);">F1+</div>
<div class="t s" style="left:547.00px;top:622.80px;font-size:14px;line-height:14px;color:#f2f2f2;font-weight:normal;transform:scaleX(0.9443);">17.09.24</div>
<div class="t s" style="left:679.00px;top:622.80px;font-size:14px;line-height:14px;color:#f2f2f2;font-weight:normal;transform:scaleX(0.8850);">AAA</div>
<div class="t s" style="left:811.00px;top:622.80px;font-size:14px;line-height:14px;color:#f2f2f2;font-weight:normal;transform:scaleX(0.9443);">17.09.24</div>
<div class="t s" style="left:943.00px;top:622.80px;font-size:14px;line-height:14px;color:#f2f2f2;font-weight:normal;transform:scaleX(0.9794);">Affirmed</div>
<div class="t s" style="left:1075.00px;top:622.80px;font-size:14px;line-height:14px;color:#f2f2f2;font-weight:normal;transform:scaleX(0.9489);">Sta</div>
<div class="t s" style="left:1207.00px;top:622.80px;font-size:14px;line-height:14px;color:#f2f2f2;font-weight:normal;">--</div>
<div class="t s" style="left:1339.00px;top:622.80px;font-size:14px;line-height:14px;color:#f2f2f2;font-weight:normal;">--</div>
<div class="t s" style="left:1471.00px;top:622.80px;font-size:14px;line-height:14px;color:#f2f2f2;font-weight:normal;">--</div>
<div class="t s" style="left:1603.00px;top:622.80px;font-size:14px;line-height:14px;color:#f2f2f2;font-weight:normal;">--</div>
<div class="t s" style="left:1735.00px;top:622.80px;font-size:14px;line-height:14px;color:#f2f2f2;font-weight:normal;transform:scaleX(0.9473);">A-1+</div>
<div class="t s" style="left:1867.00px;top:622.80px;font-size:14px;line-height:14px;color:#f2f2f2;font-weight:normal;transform:scaleX(0.9443);">01.09.21</div>
<div class="t s" style="left:19.00px;top:655.80px;font-size:14px;line-height:14px;color:#f2f2f2;font-weight:normal;transform:scaleX(0.9952);">Investitionsban<span style="letter-spacing:1.3px">...</span></div>
<div class="t s" style="left:151.00px;top:655.80px;font-size:14px;line-height:14px;color:#f2f2f2;font-weight:normal;transform:scaleX(0.9155);">52990063ADNR<span style="letter-spacing:1.3px">...</span></div>
<div class="t s" style="left:283.00px;top:655.80px;font-size:14px;line-height:14px;color:#f2f2f2;font-weight:normal;transform:scaleX(0.8850);">DE</div>
<div class="t s" style="left:415.00px;top:655.80px;font-size:14px;line-height:14px;color:#f2f2f2;font-weight:normal;transform:scaleX(0.9392);">F1+</div>
<div class="t s" style="left:547.00px;top:655.80px;font-size:14px;line-height:14px;color:#f2f2f2;font-weight:normal;transform:scaleX(0.9443);">17.09.24</div>
<div class="t s" style="left:679.00px;top:655.80px;font-size:14px;line-height:14px;color:#f2f2f2;font-weight:normal;transform:scaleX(0.8850);">AAA</div>
<div class="t s" style="left:811.00px;top:655.80px;font-size:14px;line-height:14px;color:#f2f2f2;font-weight:normal;transform:scaleX(0.9443);">17.09.24</div>
<div class="t s" style="left:943.00px;top:655.80px;font-size:14px;line-height:14px;color:#f2f2f2;font-weight:normal;transform:scaleX(0.9794);">Affirmed</div>
<div class="t s" style="left:1075.00px;top:655.80px;font-size:14px;line-height:14px;color:#f2f2f2;font-weight:normal;transform:scaleX(0.9489);">Sta</div>
<div class="t s" style="left:1207.00px;top:655.80px;font-size:14px;line-height:14px;color:#f2f2f2;font-weight:normal;">--</div>
<div class="t s" style="left:1339.00px;top:655.80px;font-size:14px;line-height:14px;color:#f2f2f2;font-weight:normal;">--</div>
<div class="t s" style="left:1471.00px;top:655.80px;font-size:14px;line-height:14px;color:#f2f2f2;font-weight:normal;">--</div>
<div class="t s" style="left:1603.00px;top:655.80px;font-size:14px;line-height:14px;color:#f2f2f2;font-weight:normal;">--</div>
<div class="t s" style="left:1735.00px;top:655.80px;font-size:14px;line-height:14px;color:#f2f2f2;font-weight:normal;">--</div>
<div class="t s" style="left:1867.00px;top:655.80px;font-size:14px;line-height:14px;color:#f2f2f2;font-weight:normal;">--</div>
<div class="t s" style="left:19.00px;top:688.80px;font-size:14px;line-height:14px;color:#f2f2f2;font-weight:normal;transform:scaleX(0.9836);">Hamburgische I<span style="letter-spacing:1.3px">...</span></div>
<div class="t s" style="left:151.00px;top:688.80px;font-size:14px;line-height:14px;color:#f2f2f2;font-weight:normal;transform:scaleX(0.9149);">5299001LWOD9<span style="letter-spacing:1.3px">...</span></div>
<div class="t s" style="left:283.00px;top:688.80px;font-size:14px;line-height:14px;color:#f2f2f2;font-weight:normal;transform:scaleX(0.8850);">DE</div>
<div class="t s" style="left:415.00px;top:688.80px;font-size:14px;line-height:14px;color:#f2f2f2;font-weight:normal;transform:scaleX(0.9392);">F1+</div>
<div class="t s" style="left:547.00px;top:688.80px;font-size:14px;line-height:14px;color:#f2f2f2;font-weight:normal;transform:scaleX(0.9443);">17.09.24</div>
<div class="t s" style="left:679.00px;top:688.80px;font-size:14px;line-height:14px;color:#f2f2f2;font-weight:normal;transform:scaleX(0.8850);">AAA</div>
<div class="t s" style="left:811.00px;top:688.80px;font-size:14px;line-height:14px;color:#f2f2f2;font-weight:normal;transform:scaleX(0.9443);">17.09.24</div>
<div class="t s" style="left:943.00px;top:688.80px;font-size:14px;line-height:14px;color:#f2f2f2;font-weight:normal;transform:scaleX(0.9794);">Affirmed</div>
<div class="t s" style="left:1075.00px;top:688.80px;font-size:14px;line-height:14px;color:#f2f2f2;font-weight:normal;transform:scaleX(0.9489);">Sta</div>
<div class="t s" style="left:1207.00px;top:688.80px;font-size:14px;line-height:14px;color:#f2f2f2;font-weight:normal;">--</div>
<div class="t s" style="left:1339.00px;top:688.80px;font-size:14px;line-height:14px;color:#f2f2f2;font-weight:normal;">--</div>
<div class="t s" style="left:1471.00px;top:688.80px;font-size:14px;line-height:14px;color:#f2f2f2;font-weight:normal;">--</div>
<div class="t s" style="left:1603.00px;top:688.80px;font-size:14px;line-height:14px;color:#f2f2f2;font-weight:normal;">--</div>
<div class="t s" style="left:1735.00px;top:688.80px;font-size:14px;line-height:14px;color:#f2f2f2;font-weight:normal;">--</div>
<div class="t s" style="left:1867.00px;top:688.80px;font-size:14px;line-height:14px;color:#f2f2f2;font-weight:normal;">--</div>
<div class="t s" style="left:19.00px;top:721.80px;font-size:14px;line-height:14px;color:#f2f2f2;font-weight:normal;transform:scaleX(0.9952);">Investitions- un<span style="letter-spacing:1.3px">...</span></div>
<div class="t s" style="left:151.00px;top:721.80px;font-size:14px;line-height:14px;color:#f2f2f2;font-weight:normal;transform:scaleX(0.9068);">529900WNKTQZ<span style="letter-spacing:1.3px">...</span></div>
<div class="t s" style="left:283.00px;top:721.80px;font-size:14px;line-height:14px;color:#f2f2f2;font-weight:normal;transform:scaleX(0.8850);">DE</div>
<div class="t s" style="left:415.00px;top:721.80px;font-size:14px;line-height:14px;color:#f2f2f2;font-weight:normal;transform:scaleX(0.9392);">F1+</div>
<div class="t s" style="left:547.00px;top:721.80px;font-size:14px;line-height:14px;color:#f2f2f2;font-weight:normal;transform:scaleX(0.9443);">17.09.24</div>
<div class="t s" style="left:679.00px;top:721.80px;font-size:14px;line-height:14px;color:#f2f2f2;font-weight:normal;transform:scaleX(0.8850);">AAA</div>
<div class="t s" style="left:811.00px;top:721.80px;font-size:14px;line-height:14px;color:#f2f2f2;font-weight:normal;transform:scaleX(0.9443);">17.09.24</div>
<div class="t s" style="left:943.00px;top:721.80px;font-size:14px;line-height:14px;color:#f2f2f2;font-weight:normal;transform:scaleX(0.9794);">Affirmed</div>
<div class="t s" style="left:1075.00px;top:721.80px;font-size:14px;line-height:14px;color:#f2f2f2;font-weight:normal;transform:scaleX(0.9489);">Sta</div>
<div class="t s" style="left:1207.00px;top:721.80px;font-size:14px;line-height:14px;color:#f2f2f2;font-weight:normal;">--</div>
<div class="t s" style="left:1339.00px;top:721.80px;font-size:14px;line-height:14px;color:#f2f2f2;font-weight:normal;">--</div>
<div class="t s" style="left:1471.00px;top:721.80px;font-size:14px;line-height:14px;color:#f2f2f2;font-weight:normal;">--</div>
<div class="t s" style="left:1603.00px;top:721.80px;font-size:14px;line-height:14px;color:#f2f2f2;font-weight:normal;">--</div>
<div class="t s" style="left:1735.00px;top:721.80px;font-size:14px;line-height:14px;color:#f2f2f2;font-weight:normal;">--</div>
<div class="t s" style="left:1867.00px;top:721.80px;font-size:14px;line-height:14px;color:#f2f2f2;font-weight:normal;">--</div>
<div class="t s" style="left:19.00px;top:754.80px;font-size:14px;line-height:14px;color:#f2f2f2;font-weight:normal;transform:scaleX(0.9952);">Investitionsban<span style="letter-spacing:1.3px">...</span></div>
<div class="t s" style="left:151.00px;top:754.80px;font-size:14px;line-height:14px;color:#f2f2f2;font-weight:normal;transform:scaleX(0.9155);">5299009T1JIGA<span style="letter-spacing:1.3px">...</span></div>
<div class="t s" style="left:283.00px;top:754.80px;font-size:14px;line-height:14px;color:#f2f2f2;font-weight:normal;transform:scaleX(0.8850);">DE</div>
<div class="t s" style="left:415.00px;top:754.80px;font-size:14px;line-height:14px;color:#f2f2f2;font-weight:normal;transform:scaleX(0.9392);">F1+</div>
<div class="t s" style="left:547.00px;top:754.80px;font-size:14px;line-height:14px;color:#f2f2f2;font-weight:normal;transform:scaleX(0.9443);">17.09.24</div>
<div class="t s" style="left:679.00px;top:754.80px;font-size:14px;line-height:14px;color:#f2f2f2;font-weight:normal;transform:scaleX(0.8850);">AAA</div>
<div class="t s" style="left:811.00px;top:754.80px;font-size:14px;line-height:14px;color:#f2f2f2;font-weight:normal;transform:scaleX(0.9443);">17.09.24</div>
<div class="t s" style="left:943.00px;top:754.80px;font-size:14px;line-height:14px;color:#f2f2f2;font-weight:normal;transform:scaleX(0.9794);">Affirmed</div>
<div class="t s" style="left:1075.00px;top:754.80px;font-size:14px;line-height:14px;color:#f2f2f2;font-weight:normal;transform:scaleX(0.9489);">Sta</div>
<div class="t s" style="left:1207.00px;top:754.80px;font-size:14px;line-height:14px;color:#f2f2f2;font-weight:normal;">--</div>
<div class="t s" style="left:1339.00px;top:754.80px;font-size:14px;line-height:14px;color:#f2f2f2;font-weight:normal;">--</div>
<div class="t s" style="left:1471.00px;top:754.80px;font-size:14px;line-height:14px;color:#f2f2f2;font-weight:normal;">--</div>
<div class="t s" style="left:1603.00px;top:754.80px;font-size:14px;line-height:14px;color:#f2f2f2;font-weight:normal;">--</div>
<div class="t s" style="left:1735.00px;top:754.80px;font-size:14px;line-height:14px;color:#f2f2f2;font-weight:normal;">--</div>
<div class="t s" style="left:1867.00px;top:754.80px;font-size:14px;line-height:14px;color:#f2f2f2;font-weight:normal;">--</div>
<div class="t s" style="left:19.00px;top:787.80px;font-size:14px;line-height:14px;color:#f2f2f2;font-weight:normal;transform:scaleX(0.9893);">Bundesrepublik <span style="letter-spacing:1.3px">...</span></div>
<div class="t s" style="left:151.00px;top:787.80px;font-size:14px;line-height:14px;color:#f2f2f2;font-weight:normal;transform:scaleX(0.9111);">529900AQBND3<span style="letter-spacing:1.3px">...</span></div>
<div class="t s" style="left:283.00px;top:787.80px;font-size:14px;line-height:14px;color:#f2f2f2;font-weight:normal;transform:scaleX(0.8850);">DE</div>
<div class="t s" style="left:415.00px;top:787.80px;font-size:14px;line-height:14px;color:#f2f2f2;font-weight:normal;transform:scaleX(0.9392);">F1+</div>
<div class="t s" style="left:547.00px;top:787.80px;font-size:14px;line-height:14px;color:#f2f2f2;font-weight:normal;transform:scaleX(0.9443);">13.09.24</div>
<div class="t s" style="left:679.00px;top:787.80px;font-size:14px;line-height:14px;color:#f2f2f2;font-weight:normal;transform:scaleX(0.8850);">AAA</div>
<div class="t s" style="left:811.00px;top:787.80px;font-size:14px;line-height:14px;color:#f2f2f2;font-weight:normal;transform:scaleX(0.9443);">13.09.24</div>
<div class="t s" style="left:943.00px;top:787.80px;font-size:14px;line-height:14px;color:#f2f2f2;font-weight:normal;transform:scaleX(0.9794);">Affirmed</div>
<div class="t s" style="left:1075.00px;top:787.80px;font-size:14px;line-height:14px;color:#f2f2f2;font-weight:normal;transform:scaleX(0.9489);">Sta</div>
<div class="t s" style="left:1207.00px;top:787.80px;font-size:14px;line-height:14px;color:#f2f2f2;font-weight:normal;">--</div>
<div class="t s" style="left:1339.00px;top:787.80px;font-size:14px;line-height:14px;color:#f2f2f2;font-weight:normal;">--</div>
<div class="t s" style="left:1471.00px;top:787.80px;font-size:14px;line-height:14px;color:#f2f2f2;font-weight:normal;">--</div>
<div class="t s" style="left:1603.00px;top:787.80px;font-size:14px;line-height:14px;color:#f2f2f2;font-weight:normal;">--</div>
<div class="t s" style="left:1735.00px;top:787.80px;font-size:14px;line-height:14px;color:#f2f2f2;font-weight:normal;">--</div>
<div class="t s" style="left:1867.00px;top:787.80px;font-size:14px;line-height:14px;color:#f2f2f2;font-weight:normal;">--</div>
<div class="t s" style="left:19.00px;top:820.80px;font-size:14px;line-height:14px;color:#f2f2f2;font-weight:normal;transform:scaleX(0.9890);">Kreditanstalt für<span style="letter-spacing:1.3px">...</span></div>
<div class="t s" style="left:151.00px;top:820.80px;font-size:14px;line-height:14px;color:#f2f2f2;font-weight:normal;transform:scaleX(0.9151);">549300GDPG70<span style="letter-spacing:1.3px">...</span></div>
<div class="t s" style="left:283.00px;top:820.80px;font-size:14px;line-height:14px;color:#f2f2f2;font-weight:normal;transform:scaleX(0.8850);">DE</div>
<div class="t s" style="left:415.00px;top:820.80px;font-size:14px;line-height:14px;color:#f2f2f2;font-weight:normal;transform:scaleX(0.9392);">F1+</div>
<div class="t s" style="left:547.00px;top:820.80px;font-size:14px;line-height:14px;color:#f2f2f2;font-weight:normal;transform:scaleX(0.9443);">17.09.24</div>
<div class="t s" style="left:679.00px;top:820.80px;font-size:14px;line-height:14px;color:#f2f2f2;font-weight:normal;transform:scaleX(0.8850);">AAA</div>
<div class="t s" style="left:811.00px;top:820.80px;font-size:14px;line-height:14px;color:#f2f2f2;font-weight:normal;transform:scaleX(0.9443);">17.09.24</div>
<div class="t s" style="left:943.00px;top:820.80px;font-size:14px;line-height:14px;color:#f2f2f2;font-weight:normal;transform:scaleX(0.9794);">Affirmed</div>
<div class="t s" style="left:1075.00px;top:820.80px;font-size:14px;line-height:14px;color:#f2f2f2;font-weight:normal;transform:scaleX(0.9489);">Sta</div>
<div class="t s" style="left:1207.00px;top:820.80px;font-size:14px;line-height:14px;color:#f2f2f2;font-weight:normal;">--</div>
<div class="t s" style="left:1339.00px;top:820.80px;font-size:14px;line-height:14px;color:#f2f2f2;font-weight:normal;">--</div>
<div class="t s" style="left:1471.00px;top:820.80px;font-size:14px;line-height:14px;color:#f2f2f2;font-weight:normal;">--</div>
<div class="t s" style="left:1603.00px;top:820.80px;font-size:14px;line-height:14px;color:#f2f2f2;font-weight:normal;">--</div>
<div class="t s" style="left:1735.00px;top:820.80px;font-size:14px;line-height:14px;color:#f2f2f2;font-weight:normal;transform:scaleX(0.9275);">A-1</div>
<div class="t s" style="left:1867.00px;top:820.80px;font-size:14px;line-height:14px;color:#f2f2f2;font-weight:normal;transform:scaleX(0.9443);">24.08.21</div>
<div class="t s" style="left:19.00px;top:853.80px;font-size:14px;line-height:14px;color:#f2f2f2;font-weight:normal;transform:scaleX(0.9906);">Landeskreditba<span style="letter-spacing:1.3px">...</span></div>
<div class="t s" style="left:151.00px;top:853.80px;font-size:14px;line-height:14px;color:#f2f2f2;font-weight:normal;transform:scaleX(0.8923);">0SK1ILSPWNVB<span style="letter-spacing:1.3px">...</span></div>
<div class="t s" style="left:283.00px;top:853.80px;font-size:14px;line-height:14px;color:#f2f2f2;font-weight:normal;transform:scaleX(0.8850);">DE</div>
<div class="t s" style="left:415.00px;top:853.80px;font-size:14px;line-height:14px;color:#f2f2f2;font-weight:normal;transform:scaleX(0.9392);">F1+</div>
<div class="t s" style="left:547.00px;top:853.80px;font-size:14px;line-height:14px;color:#f2f2f2;font-weight:normal;transform:scaleX(0.9443);">17.09.24</div>
<div class="t s" style="left:679.00px;top:853.80px;font-size:14px;line-height:14px;color:#f2f2f2;font-weight:normal;transform:scaleX(0.8850);">AAA</div>
<div class="t s" style="left:811.00px;top:853.80px;font-size:14px;line-height:14px;color:#f2f2f2;font-weight:normal;transform:scaleX(0.9443);">17.09.24</div>
<div class="t s" style="left:943.00px;top:853.80px;font-size:14px;line-height:14px;color:#f2f2f2;font-weight:normal;transform:scaleX(0.9794);">Affirmed</div>
<div class="t s" style="left:1075.00px;top:853.80px;font-size:14px;line-height:14px;color:#f2f2f2;font-weight:normal;transform:scaleX(0.9489);">Sta</div>
<div class="t s" style="left:1207.00px;top:853.80px;font-size:14px;line-height:14px;color:#f2f2f2;font-weight:normal;">--</div>
<div class="t s" style="left:1339.00px;top:853.80px;font-size:14px;line-height:14px;color:#f2f2f2;font-weight:normal;">--</div>
<div class="t s" style="left:1471.00px;top:853.80px;font-size:14px;line-height:14px;color:#f2f2f2;font-weight:normal;">--</div>
<div class="t s" style="left:1603.00px;top:853.80px;font-size:14px;line-height:14px;color:#f2f2f2;font-weight:normal;">--</div>
<div class="t s" style="left:1735.00px;top:853.80px;font-size:14px;line-height:14px;color:#f2f2f2;font-weight:normal;transform:scaleX(0.9473);">A-1+</div>
<div class="t s" style="left:1867.00px;top:853.80px;font-size:14px;line-height:14px;color:#f2f2f2;font-weight:normal;transform:scaleX(0.9443);">03.12.21</div>
<div class="t s" style="left:19.00px;top:886.80px;font-size:14px;line-height:14px;color:#f2f2f2;font-weight:normal;transform:scaleX(0.9784);">Erste Abwicklun<span style="letter-spacing:1.3px">...</span></div>
<div class="t s" style="left:151.00px;top:886.80px;font-size:14px;line-height:14px;color:#f2f2f2;font-weight:normal;transform:scaleX(0.9027);">7TG4VWERK338<span style="letter-spacing:1.3px">...</span></div>
<div class="t s" style="left:283.00px;top:886.80px;font-size:14px;line-height:14px;color:#f2f2f2;font-weight:normal;transform:scaleX(0.8850);">DE</div>
<div class="t s" style="left:415.00px;top:886.80px;font-size:14px;line-height:14px;color:#f2f2f2;font-weight:normal;transform:scaleX(0.9392);">F1+</div>
<div class="t s" style="left:547.00px;top:886.80px;font-size:14px;line-height:14px;color:#f2f2f2;font-weight:normal;transform:scaleX(0.9443);">05.09.24</div>
<div class="t s" style="left:679.00px;top:886.80px;font-size:14px;line-height:14px;color:#f2f2f2;font-weight:normal;transform:scaleX(0.8850);">AAA</div>
<div class="t s" style="left:811.00px;top:886.80px;font-size:14px;line-height:14px;color:#f2f2f2;font-weight:normal;transform:scaleX(0.9443);">05.09.24</div>
<div class="t s" style="left:943.00px;top:886.80px;font-size:14px;line-height:14px;color:#f2f2f2;font-weight:normal;transform:scaleX(0.9794);">Affirmed</div>
<div class="t s" style="left:1075.00px;top:886.80px;font-size:14px;line-height:14px;color:#f2f2f2;font-weight:normal;transform:scaleX(0.9489);">Sta</div>
<div class="t s" style="left:1207.00px;top:886.80px;font-size:14px;line-height:14px;color:#f2f2f2;font-weight:normal;">--</div>
<div class="t s" style="left:1339.00px;top:886.80px;font-size:14px;line-height:14px;color:#f2f2f2;font-weight:normal;">--</div>
<div class="t s" style="left:1471.00px;top:886.80px;font-size:14px;line-height:14px;color:#f2f2f2;font-weight:normal;">--</div>
<div class="t s" style="left:1603.00px;top:886.80px;font-size:14px;line-height:14px;color:#f2f2f2;font-weight:normal;">--</div>
<div class="t s" style="left:1735.00px;top:886.80px;font-size:14px;line-height:14px;color:#f2f2f2;font-weight:normal;transform:scaleX(0.9473);">A-1+</div>
<div class="t s" style="left:1867.00px;top:886.80px;font-size:14px;line-height:14px;color:#f2f2f2;font-weight:normal;transform:scaleX(0.9443);">09.03.21</div>
<div class="t s" style="left:19.00px;top:919.80px;font-size:14px;line-height:14px;color:#f2f2f2;font-weight:normal;transform:scaleX(0.9797);">Land Nordrhein-<span style="letter-spacing:1.3px">...</span></div>
<div class="t s" style="left:151.00px;top:919.80px;font-size:14px;line-height:14px;color:#f2f2f2;font-weight:normal;transform:scaleX(0.9113);">529900VWPV1L<span style="letter-spacing:1.3px">...</span></div>
<div class="t s" style="left:283.00px;top:919.80px;font-size:14px;line-height:14px;color:#f2f2f2;font-weight:normal;transform:scaleX(0.8850);">DE</div>
<div class="t s" style="left:415.00px;top:919.80px;font-size:14px;line-height:14px;color:#f2f2f2;font-weight:normal;transform:scaleX(0.9392);">F1+</div>
<div class="t s" style="left:547.00px;top:919.80px;font-size:14px;line-height:14px;color:#f2f2f2;font-weight:normal;transform:scaleX(0.9443);">06.09.24</div>
<div class="t s" style="left:679.00px;top:919.80px;font-size:14px;line-height:14px;color:#f2f2f2;font-weight:normal;transform:scaleX(0.8850);">AAA</div>
<div class="t s" style="left:811.00px;top:919.80px;font-size:14px;line-height:14px;color:#f2f2f2;font-weight:normal;transform:scaleX(0.9443);">06.09.24</div>
<div class="t s" style="left:943.00px;top:919.80px;font-size:14px;line-height:14px;color:#f2f2f2;font-weight:normal;transform:scaleX(0.9794);">Affirmed</div>
<div class="t s" style="left:1075.00px;top:919.80px;font-size:14px;line-height:14px;color:#f2f2f2;font-weight:normal;transform:scaleX(0.9489);">Sta</div>
<div class="t s" style="left:1207.00px;top:919.80px;font-size:14px;line-height:14px;color:#f2f2f2;font-weight:normal;">--</div>
<div class="t s" style="left:1339.00px;top:919.80px;font-size:14px;line-height:14px;color:#f2f2f2;font-weight:normal;">--</div>
<div class="t s" style="left:1471.00px;top:919.80px;font-size:14px;line-height:14px;color:#f2f2f2;font-weight:normal;">--</div>
<div class="t s" style="left:1603.00px;top:919.80px;font-size:14px;line-height:14px;color:#f2f2f2;font-weight:normal;">--</div>
<div class="t s" style="left:1735.00px;top:919.80px;font-size:14px;line-height:14px;color:#f2f2f2;font-weight:normal;transform:scaleX(0.9473);">A-1+</div>
<div class="t s" style="left:1867.00px;top:919.80px;font-size:14px;line-height:14px;color:#f2f2f2;font-weight:normal;transform:scaleX(0.9443);">23.11.21</div>
<div class="t s" style="left:19.00px;top:952.80px;font-size:14px;line-height:14px;color:#f2f2f2;font-weight:normal;transform:scaleX(0.9784);">Land Saarland</div>
<div class="t s" style="left:151.00px;top:952.80px;font-size:14px;line-height:14px;color:#f2f2f2;font-weight:normal;transform:scaleX(0.9142);">529900VFZ6ZK7<span style="letter-spacing:1.3px">...</span></div>
<div class="t s" style="left:283.00px;top:952.80px;font-size:14px;line-height:14px;color:#f2f2f2;font-weight:normal;transform:scaleX(0.8850);">DE</div>
<div class="t s" style="left:415.00px;top:952.80px;font-size:14px;line-height:14px;color:#f2f2f2;font-weight:normal;transform:scaleX(0.9392);">F1+</div>
<div class="t s" style="left:547.00px;top:952.80px;font-size:14px;line-height:14px;color:#f2f2f2;font-weight:normal;transform:scaleX(0.9443);">30.08.24</div>
<div class="t s" style="left:679.00px;top:952.80px;font-size:14px;line-height:14px;color:#f2f2f2;font-weight:normal;transform:scaleX(0.8850);">AAA</div>
<div class="t s" style="left:811.00px;top:952.80px;font-size:14px;line-height:14px;color:#f2f2f2;font-weight:normal;transform:scaleX(0.9443);">30.08.24</div>
<div class="t s" style="left:943.00px;top:952.80px;font-size:14px;line-height:14px;color:#f2f2f2;font-weight:normal;transform:scaleX(0.9794);">Affirmed</div>
<div class="t s" style="left:1075.00px;top:952.80px;font-size:14px;line-height:14px;color:#f2f2f2;font-weight:normal;transform:scaleX(0.9489);">Sta</div>
<div class="t s" style="left:1207.00px;top:952.80px;font-size:14px;line-height:14px;color:#f2f2f2;font-weight:normal;">--</div>
<div class="t s" style="left:1339.00px;top:952.80px;font-size:14px;line-height:14px;color:#f2f2f2;font-weight:normal;">--</div>
<div class="t s" style="left:1471.00px;top:952.80px;font-size:14px;line-height:14px;color:#f2f2f2;font-weight:normal;">--</div>
<div class="t s" style="left:1603.00px;top:952.80px;font-size:14px;line-height:14px;color:#f2f2f2;font-weight:normal;">--</div>
<div class="t s" style="left:1735.00px;top:952.80px;font-size:14px;line-height:14px;color:#f2f2f2;font-weight:normal;">--</div>
<div class="t s" style="left:1867.00px;top:952.80px;font-size:14px;line-height:14px;color:#f2f2f2;font-weight:normal;">--</div>
<div class="t s" style="left:19.00px;top:985.80px;font-size:14px;line-height:14px;color:#f2f2f2;font-weight:normal;transform:scaleX(0.9790);">Land Niedersac<span style="letter-spacing:1.3px">...</span></div>
<div class="t s" style="left:151.00px;top:985.80px;font-size:14px;line-height:14px;color:#f2f2f2;font-weight:normal;transform:scaleX(0.9111);">391200ITQQZ7J<span style="letter-spacing:1.3px">...</span></div>
<div class="t s" style="left:283.00px;top:985.80px;font-size:14px;line-height:14px;color:#f2f2f2;font-weight:normal;transform:scaleX(0.8850);">DE</div>
<div class="t s" style="left:415.00px;top:985.80px;font-size:14px;line-height:14px;color:#f2f2f2;font-weight:normal;transform:scaleX(0.9392);">F1+</div>
<div class="t s" style="left:547.00px;top:985.80px;font-size:14px;line-height:14px;color:#f2f2f2;font-weight:normal;transform:scaleX(0.9443);">06.09.24</div>
<div class="t s" style="left:679.00px;top:985.80px;font-size:14px;line-height:14px;color:#f2f2f2;font-weight:normal;transform:scaleX(0.8850);">AAA</div>
<div class="t s" style="left:811.00px;top:985.80px;font-size:14px;line-height:14px;color:#f2f2f2;font-weight:normal;transform:scaleX(0.9443);">06.09.24</div>
<div class="t s" style="left:943.00px;top:985.80px;font-size:14px;line-height:14px;color:#f2f2f2;font-weight:normal;transform:scaleX(0.9794);">Affirmed</div>
<div class="t s" style="left:1075.00px;top:985.80px;font-size:14px;line-height:14px;color:#f2f2f2;font-weight:normal;transform:scaleX(0.9489);">Sta</div>
<div class="t s" style="left:1207.00px;top:985.80px;font-size:14px;line-height:14px;color:#f2f2f2;font-weight:normal;">--</div>
<div class="t s" style="left:1339.00px;top:985.80px;font-size:14px;line-height:14px;color:#f2f2f2;font-weight:normal;">--</div>
<div class="t s" style="left:1471.00px;top:985.80px;font-size:14px;line-height:14px;color:#f2f2f2;font-weight:normal;">--</div>
<div class="t s" style="left:1603.00px;top:985.80px;font-size:14px;line-height:14px;color:#f2f2f2;font-weight:normal;">--</div>
<div class="t s" style="left:1735.00px;top:985.80px;font-size:14px;line-height:14px;color:#f2f2f2;font-weight:normal;">--</div>
<div class="t s" style="left:1867.00px;top:985.80px;font-size:14px;line-height:14px;color:#f2f2f2;font-weight:normal;">--</div>
<div class="t s" style="left:19.00px;top:1018.80px;font-size:14px;line-height:14px;color:#f2f2f2;font-weight:normal;transform:scaleX(0.9800);">Land Rheinland-<span style="letter-spacing:1.3px">...</span></div>
<div class="t s" style="left:151.00px;top:1018.80px;font-size:14px;line-height:14px;color:#f2f2f2;font-weight:normal;transform:scaleX(0.9218);">52990032ZS3N9<span style="letter-spacing:1.3px">...</span></div>
<div class="t s" style="left:283.00px;top:1018.80px;font-size:14px;line-height:14px;color:#f2f2f2;font-weight:normal;transform:scaleX(0.8850);">DE</div>
<div class="t s" style="left:415.00px;top:1018.80px;font-size:14px;line-height:14px;color:#f2f2f2;font-weight:normal;transform:scaleX(0.9392);">F1+</div>
<div class="t s" style="left:547.00px;top:1018.80px;font-size:14px;line-height:14px;color:#f2f2f2;font-weight:normal;transform:scaleX(0.9443);">06.09.24</div>
<div class="t s" style="left:679.00px;top:1018.80px;font-size:14px;line-height:14px;color:#f2f2f2;font-weight:normal;transform:scaleX(0.8850);">AAA</div>
<div class="t s" style="left:811.00px;top:1018.80px;font-size:14px;line-height:14px;color:#f2f2f2;font-weight:normal;transform:scaleX(0.9443);">06.09.24</div>
<div class="t s" style="left:943.00px;top:1018.80px;font-size:14px;line-height:14px;color:#f2f2f2;font-weight:normal;transform:scaleX(0.9714);">Review - No Action</div>
<div class="t s" style="left:1075.00px;top:1018.80px;font-size:14px;line-height:14px;color:#f2f2f2;font-weight:normal;transform:scaleX(0.9489);">Sta</div>
<div class="t s" style="left:1207.00px;top:1018.80px;font-size:14px;line-height:14px;color:#f2f2f2;font-weight:normal;">--</div>
<div class="t s" style="left:1339.00px;top:1018.80px;font-size:14px;line-height:14px;color:#f2f2f2;font-weight:normal;">--</div>
<div class="t s" style="left:1471.00px;top:1018.80px;font-size:14px;line-height:14px;color:#f2f2f2;font-weight:normal;">--</div>
<div class="t s" style="left:1603.00px;top:1018.80px;font-size:14px;line-height:14px;color:#f2f2f2;font-weight:normal;">--</div>
<div class="t s" style="left:1735.00px;top:1018.80px;font-size:14px;line-height:14px;color:#f2f2f2;font-weight:normal;">--</div>
<div class="t s" style="left:1867.00px;top:1018.80px;font-size:14px;line-height:14px;color:#f2f2f2;font-weight:normal;">--</div>
<div class="t s" style="left:19.00px;top:1051.80px;font-size:14px;line-height:14px;color:#f2f2f2;font-weight:normal;transform:scaleX(0.9791);">Freie Hansestad<span style="letter-spacing:1.3px">...</span></div>
<div class="t s" style="left:151.00px;top:1051.80px;font-size:14px;line-height:14px;color:#f2f2f2;font-weight:normal;transform:scaleX(0.9113);">5299000FMNZD<span style="letter-spacing:1.3px">...</span></div>
<div class="t s" style="left:283.00px;top:1051.80px;font-size:14px;line-height:14px;color:#f2f2f2;font-weight:normal;transform:scaleX(0.8850);">DE</div>
<div class="t s" style="left:415.00px;top:1051.80px;font-size:14px;line-height:14px;color:#f2f2f2;font-weight:normal;transform:scaleX(0.9392);">F1+</div>
<div class="t s" style="left:547.00px;top:1051.80px;font-size:14px;line-height:14px;color:#f2f2f2;font-weight:normal;transform:scaleX(0.9443);">30.08.24</div>
<div class="t s" style="left:679.00px;top:1051.80px;font-size:14px;line-height:14px;color:#f2f2f2;font-weight:normal;transform:scaleX(0.8850);">AAA</div>
<div class="t s" style="left:811.00px;top:1051.80px;font-size:14px;line-height:14px;color:#f2f2f2;font-weight:normal;transform:scaleX(0.9443);">30.08.24</div>
<div class="t s" style="left:943.00px;top:1051.80px;font-size:14px;line-height:14px;color:#f2f2f2;font-weight:normal;transform:scaleX(0.9794);">Affirmed</div>
<div class="t s" style="left:1075.00px;top:1051.80px;font-size:14px;line-height:14px;color:#f2f2f2;font-weight:normal;transform:scaleX(0.9489);">Sta</div>
<div class="t s" style="left:1207.00px;top:1051.80px;font-size:14px;line-height:14px;color:#f2f2f2;font-weight:normal;">--</div>
<div class="t s" style="left:1339.00px;top:1051.80px;font-size:14px;line-height:14px;color:#f2f2f2;font-weight:normal;">--</div>
<div class="t s" style="left:1471.00px;top:1051.80px;font-size:14px;line-height:14px;color:#f2f2f2;font-weight:normal;">--</div>
<div class="t s" style="left:1603.00px;top:1051.80px;font-size:14px;line-height:14px;color:#f2f2f2;font-weight:normal;">--</div>
<div class="t s" style="left:1735.00px;top:1051.80px;font-size:14px;line-height:14px;color:#f2f2f2;font-weight:normal;">--</div>
<div class="t s" style="left:1867.00px;top:1051.80px;font-size:14px;line-height:14px;color:#f2f2f2;font-weight:normal;">--</div>
</div>
<div style="position:absolute;left:1909px;top:0px;width:11px;height:1073px;background:#f1f1f1"></div>
<div style="position:absolute;left:1911px;top:18px;width:7px;height:838px;background:#c1c1c1"></div>
<svg style="left:0;top:0" width="1" height="1"><path d="M1912,1065 L1917.5,1065 L1914.75,1068.2 Z" fill="#505050"/></svg>
<div style="position:absolute;left:1689px;top:0px;width:231px;height:18px;box-sizing:border-box;background:#fff;border:1px solid #5a5a5a;border-top:none"></div>
<div class="t" style="left:1697.50px;top:1.00px;font-size:11px;line-height:11px;color:#3c3c3c;font-weight:normal;transform:scaleX(1.0702);">Google Chrome anpassen und verwalten</div>
</body></html>
